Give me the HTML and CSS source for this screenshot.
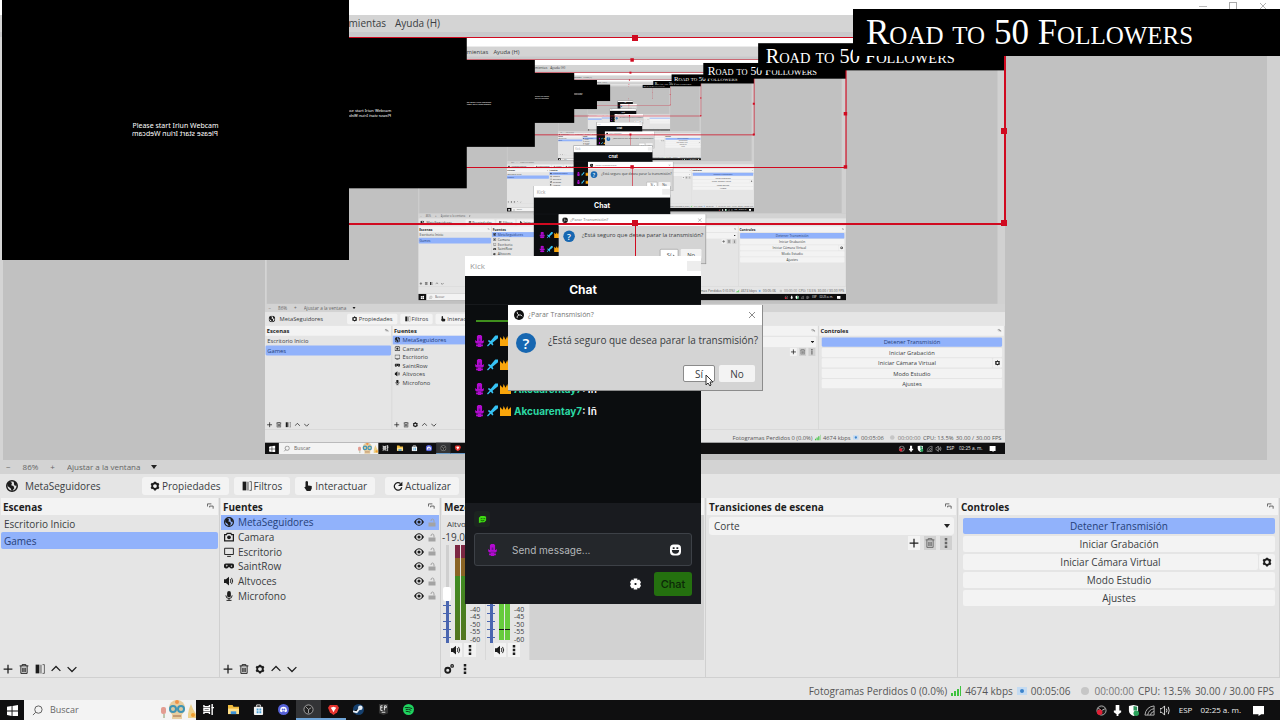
FILE: index.html
```html
<!DOCTYPE html>
<html lang="es">
<head>
    <meta charset="UTF-8">
    <title>OBS - Escritorio</title>
    <link rel="stylesheet" href="styles.css">
</head>
<body>
    <svg class="sprite" aria-hidden="true">
        <symbol id="i-globe" viewBox="0 0 16 16"><circle cx="8" cy="8" r="7" fill="none" stroke="currentColor" stroke-width="2"/><path fill="currentColor" d="M2 4l4-2 2 2-1 3 3 1 1 3-3 4-2-4-4-3zM10 1l4 3v4l-3-1z"/></symbol>
        <symbol id="i-camera" viewBox="0 0 16 16"><path fill="none" stroke="currentColor" stroke-width="2" d="M1 4h3l1-2h6l1 2h3v10H1z"/><circle cx="8" cy="8.500" r="3" fill="currentColor"/></symbol>
        <symbol id="i-monitor" viewBox="0 0 16 16"><path fill="none" stroke="currentColor" stroke-width="1.500" d="M1 2h14v10H1zM5 15h6"/></symbol>
        <symbol id="i-pad" viewBox="0 0 16 16"><path fill="currentColor" fill-rule="evenodd" d="M4 4h8a4 4 0 1 1-3 6H7a4 4 0 1 1-3-6zM3 7v1h1v1h1V8h1V7H5V6H4v1zM11 7v2h2V7z"/></symbol>
        <symbol id="i-speaker" viewBox="0 0 16 16"><path fill="currentColor" d="M0 5h3l5-4v14l-5-4H0z"/><path fill="none" stroke="currentColor" stroke-width="1.500" d="M10 5q2 3 0 6M12 3q4 5 0 10"/></symbol>
        <symbol id="i-mic" viewBox="0 0 16 16"><rect x="5" y="0" width="6" height="10" rx="3" fill="currentColor"/><path fill="none" stroke="currentColor" stroke-width="1.500" d="M3 7q0 5 5 5t5-5M8 12v3M4 15h8"/></symbol>
        <symbol id="i-gear" viewBox="0 0 16 16"><circle cx="8" cy="8" r="4.500" fill="none" stroke="currentColor" stroke-width="3"/><path stroke="currentColor" stroke-width="3" d="M8 1v3M8 12v3M2 4l2 2M12 10l2 2M2 12l2-2M12 6l2-2"/></symbol>
        <symbol id="i-filter" viewBox="0 0 16 16"><path fill="currentColor" d="M1 1h6v14H1z"/><path fill="#999" d="M8 1h3v14H8z"/><path fill="none" stroke="currentColor" d="M12 1h3v14h-3"/></symbol>
        <symbol id="i-hand" viewBox="0 0 16 16"><path fill="currentColor" d="M4 1q2-2 4 0v6l6 1v4l-2 4H6L2 10l2-1z"/></symbol>
        <symbol id="i-refresh" viewBox="0 0 16 16"><path fill="none" stroke="currentColor" stroke-width="2" d="M12 4a6 6 0 1 0 2 6"/><path fill="currentColor" d="M15 1v7H8z"/></symbol>
        <symbol id="i-eye" viewBox="0 0 16 16"><path fill="currentColor" fill-rule="evenodd" d="M0 8q8-12 16 0-8 12-16 0zm8-4.500a4.500 4.500 0 1 0 0 9 4.500 4.500 0 1 0 0-9z"/><circle cx="8" cy="8" r="2.500" fill="currentColor"/></symbol>
        <symbol id="i-lock" viewBox="0 0 16 16"><path fill="currentColor" d="M1 8h14v8H1z"/><path fill="none" stroke="currentColor" stroke-width="2" d="M6 5q0-4 3-4t3 4v3"/></symbol>
        <symbol id="i-plus" viewBox="0 0 16 16"><path stroke="currentColor" stroke-width="2" d="M8 1v14M1 8h14"/></symbol>
        <symbol id="i-trash" viewBox="0 0 16 16"><path fill="none" stroke="currentColor" stroke-width="1.500" d="M1 3h14M5 3V1h6v2M3 3v12h10V3M6 6v7M8 6v7M10 6v7"/></symbol>
        <symbol id="i-up" viewBox="0 0 16 16"><path fill="none" stroke="currentColor" stroke-width="2" d="M1 11l7-7 7 7"/></symbol>
        <symbol id="i-down" viewBox="0 0 16 16"><path fill="none" stroke="currentColor" stroke-width="2" d="M1 5l7 7 7-7"/></symbol>
        <symbol id="i-dots" viewBox="0 0 16 16"><path fill="currentColor" d="M6 0h4v4H6zM6 6h4v4H6zM6 12h4v4H6z"/></symbol>
        <symbol id="i-gears" viewBox="0 0 16 16"><circle cx="6" cy="10" r="4" fill="none" stroke="currentColor" stroke-width="3"/><circle cx="13" cy="3" r="2" fill="none" stroke="currentColor" stroke-width="2"/></symbol>
        <symbol id="i-pop" viewBox="0 0 16 16"><path fill="none" stroke="currentColor" stroke-width="2" d="M1 8V2h9M6 7h8v6M6 7v3"/></symbol>
        <symbol id="i-close" viewBox="0 0 16 16"><path stroke="currentColor" stroke-width="1.500" d="M2 2l12 12M14 2L2 14"/></symbol>
        <symbol id="i-obs" viewBox="0 0 16 16"><circle cx="8" cy="8" r="8" fill="#111"/><path fill="none" stroke="#ddd" stroke-width="1.500" d="M5 3q0 4 3 5 4-1 5 2M8 8q-4 1-3 5"/></symbol>
        <symbol id="i-badge-mic" viewBox="0 0 12 14"><path fill="#b30ad0" d="M4 0h4v1h1v6h1V6h1v3h-1v1H8v1h2v2H8v1H4v-1H2v-2h2v-1H2V9H1V6h1v1h1V1h1z"/><path fill="#6a1590" d="M5 4h2v3H5zM4 9h4v1H4z"/></symbol>
        <symbol id="i-badge-sword" viewBox="0 0 12 12"><path fill="#37c3f5" d="M9 0h3v3L6 8l1 2-1 1-2-2-3 3-1-1 3-3-2-2 1-1 2 1z"/></symbol>
        <symbol id="i-badge-crown" viewBox="0 0 12 11"><path fill="#f9a50b" d="M0 1l3 3 1-4 2 4 2-4 1 4 3-3v10H0z"/></symbol>
    </svg>

    <div class="desktop" id="desktop">
        <div class="titlebar">
            <span class="win-min"></span>
            <span class="win-max"></span>
            <svg class="icon"><use href="#i-close"/></svg>
        </div>
        <nav class="menubar">
            <a href="#">Archivo (F)</a><a href="#">Editar</a><a href="#">Ver (V)</a><a href="#">Paneles (D)</a><a href="#">Perfil (P)</a><a href="#">Escenas (S)</a><a href="#">Herramientas</a><a href="#">Ayuda (H)</a>
        </nav>

        <main class="stage">
            <div class="frame">
                <div class="capture"></div>
                <div class="selection">
                    <i class="handle n"></i>
                    <i class="handle e"></i>
                    <i class="handle s"></i>
                    <i class="handle se"></i>
                </div>
            </div>
        </main>

        <div class="zoombar">
            <button>−</button>
            <span>86%</span>
            <button>+</button>
            <select aria-label="Escala"><option>Ajustar a la ventana</option></select>
        </div>

        <div class="contextbar">
            <svg class="icon big"><use href="#i-globe"/></svg>
            <span class="context-name">MetaSeguidores</span>
            <button><svg class="icon"><use href="#i-gear"/></svg>Propiedades</button>
            <button><svg class="icon"><use href="#i-filter"/></svg>Filtros</button>
            <button><svg class="icon"><use href="#i-hand"/></svg>Interactuar</button>
            <button class="refresh"><svg class="icon"><use href="#i-refresh"/></svg>Actualizar</button>
        </div>

        <div class="docks">
            <section class="dock">
                <h2>Escenas <svg class="icon pop"><use href="#i-pop"/></svg></h2>
                <ul class="scenes">
                    <li>Escritorio Inicio</li>
                    <li class="selected">Games</li>
                </ul>
                <div class="tools">
                    <button aria-label="Agregar"><svg class="icon"><use href="#i-plus"/></svg></button>
                    <button aria-label="Eliminar"><svg class="icon"><use href="#i-trash"/></svg></button>
                    <button aria-label="Filtros"><svg class="icon"><use href="#i-filter"/></svg></button>
                    <button aria-label="Subir"><svg class="icon"><use href="#i-up"/></svg></button>
                    <button aria-label="Bajar"><svg class="icon"><use href="#i-down"/></svg></button>
                </div>
            </section>

            <section class="dock">
                <h2>Fuentes <svg class="icon pop"><use href="#i-pop"/></svg></h2>
                <ul class="sources">
                    <li class="selected"><svg class="icon"><use href="#i-globe"/></svg><span>MetaSeguidores</span><svg class="icon"><use href="#i-eye"/></svg><svg class="icon lock"><use href="#i-lock"/></svg></li>
                    <li><svg class="icon"><use href="#i-camera"/></svg><span>Camara</span><svg class="icon"><use href="#i-eye"/></svg><svg class="icon lock"><use href="#i-lock"/></svg></li>
                    <li><svg class="icon"><use href="#i-monitor"/></svg><span>Escritorio</span><svg class="icon"><use href="#i-eye"/></svg><svg class="icon lock"><use href="#i-lock"/></svg></li>
                    <li><svg class="icon"><use href="#i-pad"/></svg><span>SaintRow</span><svg class="icon"><use href="#i-eye"/></svg><svg class="icon lock"><use href="#i-lock"/></svg></li>
                    <li><svg class="icon"><use href="#i-speaker"/></svg><span>Altvoces</span><svg class="icon"><use href="#i-eye"/></svg><svg class="icon lock"><use href="#i-lock"/></svg></li>
                    <li><svg class="icon"><use href="#i-mic"/></svg><span>Microfono</span><svg class="icon"><use href="#i-eye"/></svg><svg class="icon lock"><use href="#i-lock"/></svg></li>
                </ul>
                <div class="tools">
                    <button aria-label="Agregar"><svg class="icon"><use href="#i-plus"/></svg></button>
                    <button aria-label="Eliminar"><svg class="icon"><use href="#i-trash"/></svg></button>
                    <button aria-label="Propiedades"><svg class="icon"><use href="#i-gear"/></svg></button>
                    <button aria-label="Subir"><svg class="icon"><use href="#i-up"/></svg></button>
                    <button aria-label="Bajar"><svg class="icon"><use href="#i-down"/></svg></button>
                </div>
            </section>

            <section class="dock">
                <h2>Mezclador de audio</h2>
                <div class="mixer">
                    <div class="channel">
                        <span class="channel-name">Altvoces</span>
                        <span class="channel-db">-19.0</span>
                        <div class="levels">
                            <input type="range" min="0" max="100" value="50" aria-label="Volumen Altvoces">
                            <div class="meter dim"><i></i><i></i></div>
                            <div class="scale"></div>
                        </div>
                        <div class="channel-tools">
                            <button aria-label="Silenciar"><svg class="icon"><use href="#i-speaker"/></svg></button>
                            <button aria-label="Más"><svg class="icon"><use href="#i-dots"/></svg></button>
                        </div>
                    </div>
                    <div class="channel">
                        <span class="channel-name">Micro</span>
                        <span class="channel-db">0.0</span>
                        <div class="levels">
                            <input type="range" min="0" max="100" value="60" aria-label="Volumen Microfono">
                            <div class="meter live"><i></i><i></i></div>
                            <div class="scale"></div>
                        </div>
                        <div class="channel-tools">
                            <button aria-label="Silenciar"><svg class="icon"><use href="#i-speaker"/></svg></button>
                            <button aria-label="Más"><svg class="icon"><use href="#i-dots"/></svg></button>
                        </div>
                    </div>
                    <div class="mixer-empty"></div>
                </div>
                <div class="tools">
                    <button aria-label="Avanzado"><svg class="icon"><use href="#i-gears"/></svg></button>
                    <button aria-label="Menú"><svg class="icon"><use href="#i-dots"/></svg></button>
                </div>
            </section>

            <section class="dock">
                <h2>Transiciones de escena <svg class="icon pop"><use href="#i-pop"/></svg></h2>
                <select class="transition" aria-label="Transición"><option>Corte</option></select>
                <div class="transition-tools">
                    <button aria-label="Agregar"><svg class="icon"><use href="#i-plus"/></svg></button>
                    <button class="off" aria-label="Eliminar"><svg class="icon"><use href="#i-trash"/></svg></button>
                    <button class="off" aria-label="Más"><svg class="icon"><use href="#i-dots"/></svg></button>
                </div>
            </section>

            <section class="dock">
                <h2>Controles <svg class="icon pop"><use href="#i-pop"/></svg></h2>
                <div class="controls">
                    <button class="active">Detener Transmisión</button>
                    <button>Iniciar Grabación</button>
                    <div class="split">
                        <button>Iniciar Cámara Virtual</button>
                        <button class="cfg" aria-label="Configurar"><svg class="icon"><use href="#i-gear"/></svg></button>
                    </div>
                    <button>Modo Estudio</button>
                    <button>Ajustes</button>
                </div>
            </section>
        </div>

        <footer class="statusbar">
            <span>Fotogramas Perdidos 0 (0.0%)</span>
            <svg class="icon" viewBox="0 0 10 10"><path fill="#3fc33f" d="M0 7h2v3H0zM3 5h2v5H3zM6 3h2v7H6zM9 0h1v10H9z"/></svg>
            <span class="kbps">4674 kbps</span>
            <svg class="icon" viewBox="0 0 10 10"><path fill="#c4dbf2" d="M0 1h10v8H0z"/><circle cx="5" cy="5" r="2" fill="#3b83cc"/></svg>
            <span class="time">00:05:06</span>
            <svg class="icon" viewBox="0 0 10 10"><circle cx="5" cy="5" r="4" fill="#c6c6c6"/></svg>
            <span class="idle">00:00:00</span>
            <span>CPU: 13.5%</span>
            <span>30.00 / 30.00 FPS</span>
        </footer>

        <div class="taskbar">
            <div class="start"><svg viewBox="0 0 12 12"><path fill="#fff" d="M0 2l5-1v5H0zM6 1l6-1v6H6zM0 7h5v5l-5-1zM6 7h6v5H6z"/></svg></div>
            <div class="search">
                <svg viewBox="0 0 12 12"><circle cx="7" cy="5" r="4" fill="none" stroke="#555"/><path stroke="#555" d="M4 8l-3 3"/></svg>
                <input type="text" placeholder="Buscar" aria-label="Buscar">
                <svg class="skull" viewBox="0 0 36 20"><rect x="1" y="7" width="5" height="7" rx="2" fill="#e39c91"/><path stroke="#8a9a6a" d="M4 14v4"/><circle cx="17" cy="8" r="8" fill="#e7cd9f"/><circle cx="17" cy="2" r="2" fill="#ef9348"/><path fill="#e7cd9f" d="M12 12h10v7H12z"/><circle cx="13" cy="9" r="4" fill="#3e94b5"/><circle cx="21" cy="9" r="4" fill="#3e94b5"/><circle cx="13" cy="9" r="2" fill="#d8c9a0"/><circle cx="21" cy="9" r="2" fill="#d8c9a0"/><path stroke="#a06a4a" d="M13 16h8"/><path fill="#ecd08b" d="M29 9l2-5 2 5 3 5v4h-8v-4z"/><circle cx="33" cy="15" r="2" fill="#ef9d2f"/></svg>
            </div>
            <div class="apps">
                <span><svg viewBox="0 0 12 12"><path fill="none" stroke="#fff" stroke-width="1.500" d="M1 1v2h6V1M1 11V9h6v2M1 5h6v2H1zM10 0v12M9 4h3"/></svg></span>
                <span><svg viewBox="0 0 12 12"><path fill="#f0bb3c" d="M0 1h5l1 2h6v8H0z"/><path fill="#ffe08a" d="M0 5h12v6H0z"/><path fill="#3c93db" d="M3 8h6v3H3z"/></svg></span>
                <span><svg viewBox="0 0 12 12"><path fill="none" stroke="#eee" d="M4 3V1h4v2"/><rect x="1" y="3" width="10" height="9" rx="1" fill="#f2f2f2"/><path fill="#46a0d8" d="M4 5h2v2H4zM7 5h2v2H7zM4 8h2v2H4zM7 8h2v2H7z"/></svg></span>
                <span><svg viewBox="0 0 12 12"><circle cx="6" cy="6" r="6" fill="#5561d8"/><path fill="#fff" d="M3 4q3-2 6 0l1 4-2 1-1-1H5L4 9 2 8z"/><circle cx="5" cy="6" r="1" fill="#5561d8"/><circle cx="7" cy="6" r="1" fill="#5561d8"/></svg></span>
                <span class="current"><svg viewBox="0 0 12 12"><circle cx="6" cy="6" r="5" fill="#222" stroke="#aaa"/><path fill="none" stroke="#aaa" d="M3 3l3 3 3-2M6 6v4"/></svg></span>
                <span class="open"><svg viewBox="0 0 12 12"><path fill="#e5342f" d="M2 1h8l2 3-2 5-4 3-4-3-2-5z"/><path fill="#fff" d="M3 4l3-1 3 1-2 3-1 2-1-2z"/></svg></span>
                <span><svg viewBox="0 0 12 12"><circle cx="6" cy="6" r="6" fill="#16406e"/><circle cx="8" cy="4" r="2.500" fill="#e8eef5"/><path stroke="#e8eef5" stroke-width="2" d="M0 8l4 1 3-4"/></svg></span>
                <span><svg viewBox="0 0 12 12"><path fill="#333" d="M1 0h10v10l-5 2-5-2z"/><path fill="none" stroke="#eee" d="M5 2H3v5h2M3 4h2M7 7V2h2v2H7M4 9h4"/></svg></span>
                <span><svg viewBox="0 0 12 12"><circle cx="6" cy="6" r="6" fill="#1fd35f"/><path fill="none" stroke="#0c2a15" d="M2 4q4-1 8 1M3 6q3-1 6 1M3 8q3 0 5 1"/></svg></span>
            </div>
            <div class="tray">
                <svg viewBox="0 0 12 12"><circle cx="6" cy="6" r="5" fill="#222" stroke="#bbb"/><path stroke="#bbb" d="M2 3l4 3 4-2"/><circle cx="4" cy="8" r="3" fill="#e02035"/></svg>
                <svg viewBox="0 0 12 12"><path fill="#fff" d="M4 0h4v7H4zM2 6h8v2L7 10v2H5v-2L2 8z"/></svg>
                <svg viewBox="0 0 12 12"><path fill="#fff" d="M1 1l5-1 5 1v5q0 4-5 6-5-2-5-6z"/><circle cx="9" cy="9" r="3" fill="#29a35a"/><path fill="#2b9159" d="M6 1l4 1v4H6z"/></svg>
                <svg viewBox="0 0 12 12"><path fill="none" stroke="#bbb" d="M1 11Q2 2 11 1M4 11q1-6 7-7M7 11q0-3 4-4M11 1v10H1"/></svg>
                <svg viewBox="0 0 12 12"><path fill="none" stroke="#eee" d="M0 4h2l3-3v10L2 8H0zM7 4q1 2 0 4M9 2q2 4 0 8"/></svg>
                <span class="lang">ESP</span>
                <span class="clock">02:25 a. m.</span>
                <svg class="notes" viewBox="0 0 12 12"><path fill="#fff" d="M0 1h12v9H9l-3 2V10H0z"/></svg>
            </div>
        </div>

        <div class="webcam">
            <p>Please start Iriun Webcam</p>
            <p class="mirror">Please start Iriun Webcam</p>
        </div>
        <div class="goal">Road to 50 Followers</div>

        <div class="chat">
            <div class="chat-title">Kick<span></span></div>
            <div class="chat-head">Chat</div>
            <div class="chat-log">
                <div class="chat-line"></div>
                <p><svg><use href="#i-badge-mic"/></svg><svg><use href="#i-badge-sword"/></svg><svg><use href="#i-badge-crown"/></svg></p>
                <p><svg><use href="#i-badge-mic"/></svg><svg><use href="#i-badge-sword"/></svg><svg><use href="#i-badge-crown"/></svg></p>
                <p><svg><use href="#i-badge-mic"/></svg><svg><use href="#i-badge-sword"/></svg><svg><use href="#i-badge-crown"/></svg><b>Akcuarentay7</b>: Iñ</p>
                <p><svg><use href="#i-badge-mic"/></svg><svg><use href="#i-badge-sword"/></svg><svg><use href="#i-badge-crown"/></svg><b>Akcuarentay7</b>: Iñ</p>
            </div>
            <div class="chat-foot">
                <div class="emote"><svg viewBox="0 0 10 10"><path fill="#3fdc12" d="M3 1h4l2 1v4L7 8H4L1 9V3z"/><path stroke="#176a08" d="M3 4h2M6 4h2M3 6q2 1 4 0"/></svg></div>
                <div class="message">
                    <svg><use href="#i-badge-mic"/></svg>
                    <input type="text" placeholder="Send message..." aria-label="Mensaje">
                    <svg viewBox="0 0 12 12"><rect width="12" height="12" rx="4" fill="#fff"/><path fill="#24272b" d="M3 3h2v2H3zM7 3h2v2H7zM2 6h8q0 4-4 4T2 6z"/></svg>
                </div>
                <div class="send">
                    <svg viewBox="0 0 12 12"><path fill="#fff" fill-rule="evenodd" d="M4 0h4v2l2-1 2 3-1 2 1 2-2 3-2-1v2H4v-2l-2 1-2-3 1-2-1-2 2-3 2 1zm1 5v2h2V5z"/></svg>
                    <button>Chat</button>
                </div>
            </div>
        </div>

        <div class="dialog">
            <div class="dialog-title">
                <svg class="icon"><use href="#i-obs"/></svg>
                <span>¿Parar Transmisión?</span>
                <svg class="icon"><use href="#i-close"/></svg>
            </div>
            <div class="dialog-body">
                <span class="question">?</span>
                <p>¿Está seguro que desea parar la transmisión?</p>
            </div>
            <div class="dialog-buttons">
                <button class="default">Sí</button>
                <button>No</button>
            </div>
            <svg class="cursor" viewBox="0 0 8 13"><path fill="#fff" stroke="#333" d="M1 1v10l2-2 2 3 1-1-1-3h3z"/></svg>
        </div>
    </div>

    <script src="script.js"></script>
</body>
</html>
```

FILE: styles.css
```css
:root {
    --ui: "Open Sans", "Noto Sans", sans-serif;
    --panel: #e5e5e5;
    --light: #f3f3f3;
    --accent: #91b2fb;
    --text: #3a3d42;
    --red: #d00a20;
}

* {
    box-sizing: border-box;
}

body {
    margin: 0;
    overflow: hidden;
    font-family: var(--ui);
    font-size: 10px;
    line-height: 14px;
    color: var(--text);
}

p, h2, ul {
    margin: 0;
    padding: 0;
}

a {
    color: inherit;
    text-decoration: none;
}

button, input, select {
    font: inherit;
    color: inherit;
    border: 0;
    margin: 0;
    padding: 0;
    background: none;
}

.sprite {
    position: absolute;
    width: 0;
    height: 0;
}

.icon {
    flex: none;
    width: 10px;
    height: 10px;
    color: #1c1c1c;
}

.icon.big {
    width: 12px;
    height: 12px;
}

.desktop {
    position: relative;
    display: flex;
    flex-direction: column;
    width: 100vw;
    height: 100vh;
    overflow: hidden;
    background: var(--panel);
}

/* window header */
.titlebar {
    flex: none;
    display: flex;
    justify-content: flex-end;
    align-items: center;
    gap: 22px;
    height: 15px;
    padding: 0 13px 3px;
    background: #fff;
}

.titlebar .icon,
.win-max {
    width: 8px;
    height: 8px;
    color: #999;
}

.win-min {
    width: 8px;
    border-top: 1px solid #bbb;
}

.win-max {
    border: 1px solid #aaa;
}

.menubar {
    flex: none;
    display: flex;
    gap: 9px;
    height: 22px;
    padding-top: 1px;
    padding-left: 20px;
    background: #d4d4d4;
    border-bottom: 5px solid #c9c9cb;
}

.menubar a {
    white-space: nowrap;
}

/* preview */
.stage {
    flex: 1;
    min-height: 0;
    display: flex;
    justify-content: center;
    padding: 1px 0 6px;
    border-left: 3px solid #d4d4d4;
    border-right: 13px solid #d1d1d1;
    background: #c1c1c1;
}

.frame {
    position: relative;
    flex: none;
    height: 100%;
    aspect-ratio: 16 / 9;
}

.capture {
    position: relative;
    height: 100%;
    overflow: hidden;
    background: #c1c1c1;
}

/* drawn on top of the capture surface, must not size it */
.capture > .desktop {
    position: absolute;
    left: 0;
    top: 0;
    transform-origin: 0 0;
}

.selection {
    position: absolute;
    inset: -1px -1px 55% 0;
    border: 2px solid var(--red);
    border-width: 1px 2px 2px 1px;
}

.selection::after {
    content: "";
    position: absolute;
    left: 50%;
    top: 100%;
    height: 40px;
    border-left: 1px solid var(--red);
}

.handle {
    position: absolute;
    width: 6px;
    height: 6px;
    margin: -3px;
    background: var(--red);
}

.handle.n { left: 50%; top: 0; }
.handle.e { left: 100%; top: 50%; }
.handle.s { left: 50%; top: 100%; }
.handle.se { left: 100%; top: 100%; }

.zoombar {
    flex: none;
    display: flex;
    align-items: center;
    gap: 12px;
    height: 14px;
    padding-left: 6px;
    font-size: 8px;
    background: #d3d3d3;
    color: #666;
}

.zoombar select,
.transition {
    appearance: none;
    background: no-repeat right center / 6px 4px url("data:image/svg+xml,%3csvg xmlns='http://www.w3.org/2000/svg' viewBox='0 0 6 4'%3e%3cpath d='M0 0h6L3 4z' fill='%23222'/%3e%3c/svg%3e");
}

.zoombar select {
    width: 90px;
}

.contextbar {
    flex: none;
    display: flex;
    align-items: center;
    gap: 5px;
    height: 24px;
    padding-left: 6px;
}

.context-name {
    width: 114px;
    padding-left: 2px;
}

.contextbar button {
    display: flex;
    align-items: center;
    gap: 2px;
    height: 18px;
    padding: 0 8px;
    border-radius: 3px;
    background: var(--light);
}

.contextbar .refresh {
    margin-left: 5px;
}

/* docks */
.docks {
    flex: none;
    display: grid;
    grid-template-columns: 220fr 221fr 265fr 252fr 322fr;
    height: 180px;
    border-bottom: 1px solid #d0d0d0;
}

.dock {
    display: flex;
    flex-direction: column;
    min-width: 0;
    padding: 0 1px;
    border-right: 1px solid #d0d0d0;
}

.dock h2 {
    flex: none;
    display: flex;
    justify-content: space-between;
    align-items: center;
    height: 17px;
    padding: 0 4px 0 2px;
    font-size: 10px;
    font-weight: 700;
    color: #1e1e1e;
    background: var(--light);
    white-space: nowrap;
}

.dock .pop {
    width: 7px;
    height: 7px;
    color: #555;
}

.dock ul {
    list-style: none;
}

.scenes li {
    height: 17px;
    padding: 2px 3px 1px;
    border-radius: 2px;
}

.sources {
    display: flex;
    flex-direction: column;
    height: 88px;
}

.sources li {
    flex: 1;
    display: flex;
    align-items: center;
    gap: 4px;
    padding: 0 3px;
}

.sources span {
    flex: 1;
}

.sources .lock {
    width: 8px;
    height: 9px;
    color: #a3a3a3;
}

.dock .selected {
    background: var(--accent);
    color: #263f78;
}

.tools {
    display: flex;
    align-items: center;
    gap: 6px;
    height: 17px;
    margin-top: auto;
    padding-left: 2px;
}

.tools button {
    display: flex;
}

.mixer {
    flex: 1;
    display: flex;
    min-height: 0;
}

.channel {
    display: flex;
    flex-direction: column;
    width: 44px;
    border-right: 1px solid #d8d8d8;
}

.channel-name {
    padding: 2px 0 0 5px;
    font-size: 8px;
    line-height: 14px;
}

.channel-db {
    line-height: 12px;
}

.levels {
    display: flex;
    height: 100px;
    padding-top: 2px;
}

.levels input {
    appearance: none;
    writing-mode: vertical-lr;
    direction: rtl;
    width: 10px;
    height: 98px;
    background:
        repeating-linear-gradient(#4a66b0 0 1px, transparent 1px 8px) center bottom / 8px 38px no-repeat,
        linear-gradient(#cfcfcf 56%, #4a66b0 56%) center / 3px 100% no-repeat;
}

.levels input::-webkit-slider-thumb {
    appearance: none;
    width: 8px;
    height: 14px;
    border-radius: 2px;
    background: #fff;
}

.meter {
    display: flex;
    gap: 1px;
    margin: 0 4px 0 3px;
    padding-bottom: 3px;
}

.meter i {
    width: 5px;
    background: linear-gradient(#7c2743 14%, #8a6425 14% 33%, #3f8c22 33%, #547520);
}

.meter.live i {
    background: linear-gradient(transparent 88%, #111 88% 90%, transparent 90%), #66cb3c;
}

.scale {
    display: flex;
    flex-direction: column;
    justify-content: space-between;
    font-size: 7px;
    line-height: 7px;
}

.channel-tools {
    display: flex;
    gap: 2px;
    padding-left: 8px;
}

.channel-tools button {
    display: flex;
    align-items: center;
    height: 14px;
    background: var(--light);
    padding: 0 1px;
}

.mixer-empty {
    flex: 1;
    background: #d2d2d2;
}

.transition {
    height: 18px;
    margin: 2px 2px 1px;
    padding-left: 5px;
    border-radius: 3px;
    background-color: var(--light);
    background-position: right 4px center;
}

.transition-tools {
    display: flex;
    justify-content: flex-end;
    gap: 4px;
    padding-right: 4px;
}

.transition-tools button {
    display: flex;
    align-items: center;
    height: 14px;
    padding: 0 1px;
    background: var(--light);
}

.transition-tools .off {
    background: #d0d0d0;
}

.transition-tools .off .icon {
    color: #666;
}

.controls {
    display: flex;
    flex-direction: column;
    gap: 2px;
    padding: 3px 3px 3px 4px;
}

.controls button {
    height: 16px;
    line-height: 16px;
    border-radius: 2px;
    background: var(--light);
}

.controls .active {
    background: var(--accent);
    color: #263f78;
}

.split {
    display: flex;
    gap: 1px;
}

.split button {
    flex: 1;
}

.split .cfg {
    flex: none;
    display: flex;
    align-items: center;
    padding: 0 3px;
}

.statusbar {
    flex: none;
    display: flex;
    justify-content: flex-end;
    align-items: center;
    gap: 4px;
    height: 22px;
    padding: 5px 6px 1px;
    color: #555;
    white-space: nowrap;
}

.statusbar .time {
    margin-right: 6px;
}

.statusbar .idle {
    color: #777;
}

/* windows taskbar */
.taskbar {
    flex: none;
    display: flex;
    height: 20px;
    background: #0f0f10;
    color: #eee;
}

.taskbar svg {
    flex: none;
    width: 11px;
    height: 11px;
}

.start {
    display: flex;
    align-items: center;
    justify-content: center;
    width: 24px;
}

.search {
    display: flex;
    align-items: center;
    gap: 7px;
    width: 172px;
    padding-left: 8px;
    background: var(--light);
}

.search input {
    flex: 1;
    min-width: 0;
    font-size: 9px;
}

.search input::placeholder {
    color: #666;
    opacity: 1;
}

.search .skull {
    width: 36px;
    height: 20px;
}

.apps {
    display: flex;
}

.apps span {
    display: flex;
    align-items: center;
    justify-content: center;
    width: 25px;
    border-bottom: 2px solid transparent;
}

.apps .current {
    background: #333436;
}

.apps .current,
.apps .open {
    border-color: #6fa5d8;
}

.tray {
    display: flex;
    align-items: center;
    gap: 5px;
    margin-left: auto;
    padding-right: 16px;
    font-size: 8px;
    white-space: nowrap;
}

.lang {
    margin: 0 3px;
}

.tray .notes {
    margin-left: 7px;
}

/* stream overlays */
.webcam {
    position: absolute;
    left: 2px;
    top: 0;
    width: 347px;
    height: 260px;
    display: flex;
    flex-direction: column;
    align-items: center;
    justify-content: center;
    background: #000;
    color: #fff;
    font-family: "Noto Sans", sans-serif;
    font-size: 7px;
    line-height: 8px;
}

.mirror {
    transform: scaleX(-1);
}

.goal {
    position: absolute;
    right: 0;
    top: 9px;
    width: 427px;
    padding: 0 13px;
    background: #000;
    color: #fff;
    font-family: "Liberation Serif", serif;
    font-size: 35px;
    line-height: 47px;
    font-variant: small-caps;
    white-space: nowrap;
}

/* chat window */
.chat {
    position: absolute;
    left: 465px;
    top: 256px;
    width: 236px;
    height: 348px;
    display: flex;
    flex-direction: column;
    background: #0b0d0f;
    color: #fff;
    font-family: Inter, sans-serif;
}

.chat svg {
    flex: none;
    width: 11px;
    height: 12px;
}

.chat-title {
    display: flex;
    justify-content: space-between;
    height: 20px;
    padding-left: 5px;
    background: #fff;
    color: #999;
    font: 8px/19px var(--ui);
}

.chat-title span {
    width: 14px;
    height: 10px;
    margin-top: 5px;
    background: #ededed;
}

.chat-head {
    height: 29px;
    border-bottom: 1px solid #17191c;
    font-size: 12px;
    font-weight: 700;
    line-height: 28px;
    text-align: center;
}

.chat-log {
    flex: 1;
    padding: 15px 9px 0;
}

.chat-line {
    height: 2px;
    margin: 0 2px 7px;
    background: #3f8f1d;
}

.chat-log p {
    display: flex;
    align-items: center;
    height: 24px;
    font-size: 10px;
    font-weight: 600;
}

.chat-log p:last-child {
    height: 20px;
}

.chat-log svg {
    margin-right: 2px;
}

.chat-log b {
    margin-left: 1px;
    font-weight: 700;
    color: #2bd9a4;
}

.chat-foot {
    display: flex;
    flex-direction: column;
    height: 101px;
    padding: 8px 9px;
    background: #191b1f;
}

.emote {
    display: flex;
    align-items: center;
    justify-content: center;
    width: 16px;
    height: 16px;
    border-radius: 3px;
    background: #1c2420;
}

.emote svg {
    width: 9px;
    height: 9px;
}

.message {
    display: flex;
    align-items: center;
    gap: 14px;
    height: 33px;
    margin: 6px 0;
    padding: 0 10px 0 12px;
    border: 1px solid #3d4147;
    border-radius: 3px;
    background: #24272b;
}

.message input {
    flex: 1;
    min-width: 0;
    font-size: 10px;
}

.message input::placeholder {
    color: #b4b7ba;
    opacity: 1;
}

.send {
    display: flex;
    justify-content: flex-end;
    align-items: center;
    gap: 13px;
}

.send button {
    width: 38px;
    height: 24px;
    border-radius: 3px;
    background: #24700f;
    color: #0c2808;
    font-size: 11px;
    font-weight: 500;
}

/* stop streaming dialog */
.dialog {
    position: absolute;
    left: 508px;
    top: 305px;
    width: 255px;
    display: flex;
    flex-direction: column;
    border: 1px solid #8c8c8c;
    border-width: 0 1px 1px 0;
    background: #d4d4d4;
}

.dialog-title {
    display: flex;
    align-items: center;
    gap: 4px;
    height: 20px;
    padding: 0 6px;
    background: #fff;
    color: #777;
    font-size: 7px;
}

.dialog-title span {
    flex: 1;
}

.dialog-title .icon:last-child {
    width: 8px;
    height: 8px;
    color: #666;
}

.dialog-body {
    display: flex;
    gap: 12px;
    padding: 8px;
    height: 40px;
    white-space: nowrap;
}

.question {
    flex: none;
    width: 20px;
    height: 20px;
    border-radius: 50%;
    background: #1767b1;
    color: #fff;
    font-size: 15px;
    font-weight: 600;
    line-height: 20px;
    text-align: center;
}

.dialog-buttons {
    display: flex;
    justify-content: flex-end;
    gap: 4px;
    height: 25px;
    padding-right: 7px;
}

.dialog-buttons button {
    width: 36px;
    height: 17px;
    border-radius: 2px;
    background: var(--light);
}

.dialog-buttons .default {
    width: 32px;
    border: 1px solid #8b8b8b;
    background: #fff;
}

.cursor {
    position: absolute;
    left: 197px;
    top: 69px;
    width: 8px;
    height: 13px;
}
```

FILE: script.js
```js
const desktop = document.getElementById('desktop');

// meter scale labels, 0 to -60 dB
document.querySelectorAll('.scale').forEach(scale => {
    for (let db = 0; db >= -60; db -= 5) {
        const label = document.createElement('span');
        label.textContent = db;
        scale.append(label);
    }
});

// the scene captures the screen, so the preview holds the desktop again
const source = desktop.cloneNode(true);
source.removeAttribute('id');
source.setAttribute('inert', '');

function fitScale() {
    return desktop.querySelector('.frame').clientWidth / window.innerWidth;
}

let target = desktop.querySelector('.capture');
for (let depth = 0; depth < 5; depth++) {
    const copy = source.cloneNode(true);
    copy.style.transform = `scale(${fitScale()})`;
    target.append(copy);
    target = copy.querySelector('.capture');
}

window.addEventListener('resize', () => {
    document.querySelectorAll('.capture > .desktop').forEach(copy => {
        copy.style.transform = `scale(${fitScale()})`;
    });
});
```
